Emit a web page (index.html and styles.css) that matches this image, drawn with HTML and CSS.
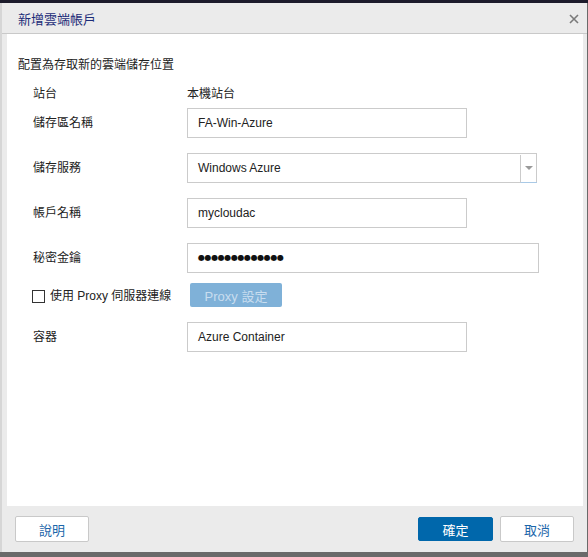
FILE: index.html
```html
<!DOCTYPE html>
<html lang="zh-Hant">
<head>
<meta charset="utf-8">
<title>新增雲端帳戶</title>
<link rel="stylesheet" href="styles.css">
</head>
<body>
<div class="screen">
  <div class="dialog">
    <div class="header">
      <span class="title">新增雲端帳戶</span>
      <svg class="close" width="10" height="10" viewBox="0 0 10 10"><path d="M1 1L9 9M9 1L1 9" stroke="#7a7a7a" stroke-width="1.6" fill="none"/></svg>
    </div>
    <div class="content">
      <div class="desc">配置為存取新的雲端儲存位置</div>
      <div class="row row-site">
        <div class="label">站台</div>
        <div class="value">本機站台</div>
      </div>
      <div class="row field">
        <div class="label">儲存區名稱</div>
        <div class="input">FA-Win-Azure</div>
      </div>
      <div class="row field">
        <div class="label">儲存服務</div>
        <div class="input select">
          <span class="select-text">Windows Azure</span>
          <span class="select-arrow"><svg width="8" height="4" viewBox="0 0 8 4"><path d="M0 0H8L4 4Z" fill="#9a9a9a"/></svg></span>
        </div>
      </div>
      <div class="row field">
        <div class="label">帳戶名稱</div>
        <div class="input">mycloudac</div>
      </div>
      <div class="row field">
        <div class="label">秘密金鑰</div>
        <div class="input wide"><span class="dots">●●●●●●●●●●●●●</span></div>
      </div>
      <div class="row proxy-row">
        <label class="check"><span class="box"></span>使用 Proxy 伺服器連線</label>
        <div class="proxy-btn">Proxy 設定</div>
      </div>
      <div class="row field">
        <div class="label">容器</div>
        <div class="input">Azure Container</div>
      </div>
    </div>
    <div class="footer">
      <div class="btn">說明</div>
      <div class="spacer"></div>
      <div class="btn primary">確定</div>
      <div class="btn">取消</div>
    </div>
  </div>
</div>
</body>
</html>
```
FILE: styles.css
```css
html, body {
  margin: 0;
  padding: 0;
}
body {
  width: 588px;
  height: 557px;
  background: #6a6a6a;
  font-family: "Liberation Sans", "Noto Sans CJK TC", sans-serif;
  font-size: 12px;
  color: #222;
  overflow: hidden;
}
.screen {
  border-top: 3px solid #1c1b2b;
  height: 554px;
  box-sizing: border-box;
  display: flex;
  flex-direction: column;
}
.dialog {
  width: 587px;
  height: 549px;
  background: #ebebeb;
  display: flex;
  flex-direction: column;
  border-left: 2px solid #d6d6d6;
  box-sizing: border-box;
}
.header {
  height: 30px;
  border-bottom: 1px solid #c9c9c9;
  display: flex;
  align-items: center;
  padding-left: 16px;
  padding-right: 8px;
}
.title {
  font-size: 13px;
  color: #1c2c78;
  flex: 1;
  padding-top: 1px;
}
.close {
  display: block;
  margin-top: 1px;
}
.content {
  background: #fff;
  margin: 0 4px 0 5px;
  height: 472px;
  padding: 23px 0 0 11px;
  box-sizing: border-box;
}
.desc {
  line-height: 16px;
  height: 16px;
}
.row {
  display: flex;
  align-items: center;
  padding-left: 15px;
}
.label {
  width: 154px;
  line-height: 16px;
}
.value {
  line-height: 16px;
}
.row-site {
  margin-top: 13px;
  height: 16px;
}
.field {
  margin-top: 15px;
  height: 30px;
}
.row-site + .field {
  margin-top: 6px;
}
.input {
  width: 280px;
  height: 30px;
  box-sizing: border-box;
  border: 1px solid #cbcbcb;
  padding-left: 10px;
  display: flex;
  align-items: center;
  line-height: 16px;
}
.input.wide {
  width: 352px;
}
.select {
  width: 350px;
  padding-left: 0;
}
.select-text {
  flex: 1;
  padding-left: 10px;
}
.select-arrow {
  width: 17px;
  height: 28px;
  border-left: 1px solid #cbcbcb;
  border-bottom: 1px solid #a9c9e6;
  box-sizing: border-box;
  display: flex;
  align-items: center;
  justify-content: center;
  margin-top: 1px;
  margin-right: -1px;
}
.dots {
  font-family: "DejaVu Sans", sans-serif;
  font-size: 8px;
  letter-spacing: -0.4px;
  color: #111;
}
.proxy-row {
  margin-top: 10px;
  height: 24px;
  padding-left: 14px;
}
.check {
  width: 158px;
  display: flex;
  align-items: center;
  line-height: 16px;
  margin-top: 2px;
}
.box {
  width: 13px;
  height: 13px;
  box-sizing: border-box;
  border: 1px solid #333;
  margin-right: 5px;
}
.proxy-btn {
  width: 92px;
  height: 24px;
  background: #7fb1d8;
  color: #c8ddef;
  border-radius: 2px;
  display: flex;
  align-items: center;
  justify-content: center;
  font-size: 13px;
}
.proxy-row + .field {
  margin-top: 15px;
}
.footer {
  height: 46px;
  display: flex;
  align-items: flex-start;
  padding: 10px 13px 0 13px;
  gap: 7px;
  box-sizing: border-box;
}
.spacer {
  flex: 1;
}
.btn {
  width: 74px;
  height: 26px;
  box-sizing: border-box;
  border: 1px solid #c9c9c9;
  border-radius: 2px;
  background: #fff;
  color: #1b66aa;
  font-size: 13px;
  display: flex;
  align-items: center;
  justify-content: center;
}
.btn.primary {
  width: 75px;
  height: 24px;
  margin-top: 1px;
  background: #0067ab;
  border-color: #0067ab;
  color: #fff;
}
```
